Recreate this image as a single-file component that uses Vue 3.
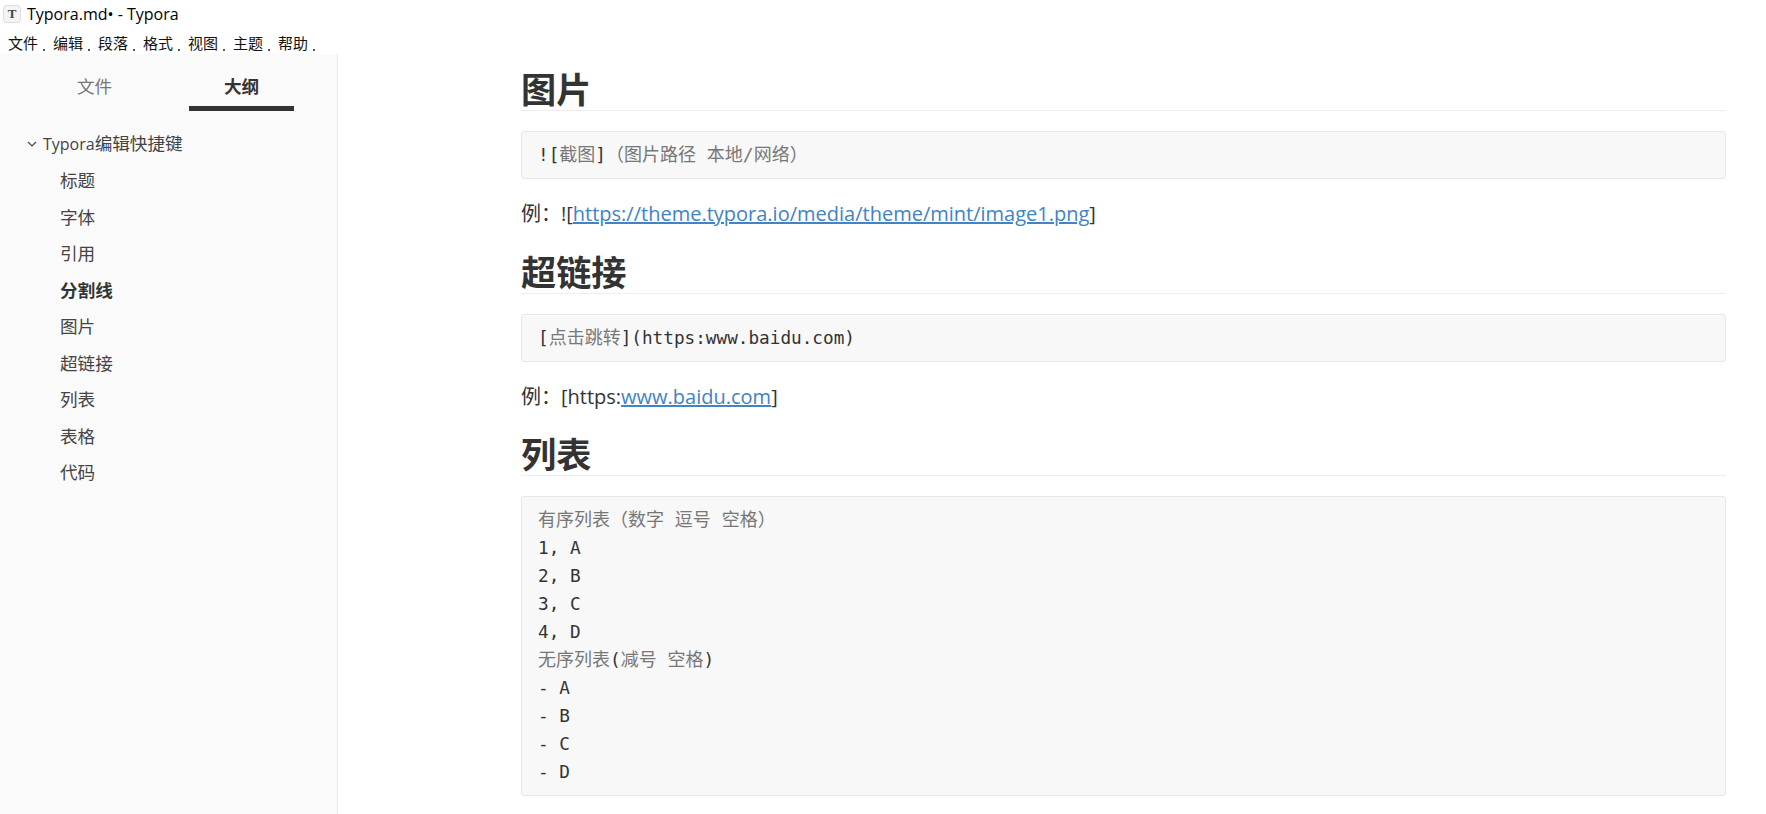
<script setup>
const menus = ['文件', '编辑', '段落', '格式', '视图', '主题', '帮助']
const outline = ['标题', '字体', '引用', '分割线', '图片', '超链接', '列表', '表格', '代码']
const listLines = ['1, A', '2, B', '3, C', '4, D']
const listLines2 = ['- A', '- B', '- C', '- D']
</script>

<template>
  <div class="win">
    <div class="titlebar">
      <span class="appicon">T</span>
      <span class="title">Typora.md• - Typora</span>
    </div>
    <div class="menubar">
      <span v-for="m in menus" :key="m" class="menu">{{ m }}<i class="dot"></i></span>
    </div>
    <div class="main">
      <aside class="side">
        <div class="tabs">
          <div class="tab">文件</div>
          <div class="tab on">大纲</div>
        </div>
        <div class="tree">
          <div class="row root">
            <svg class="chev" width="10" height="6" viewBox="0 0 10 6"><path d="M1 1l4 4 4-4" fill="none" stroke="#444" stroke-width="1.2" /></svg>
            <span><span class="latin">Typora</span>编辑快捷键</span>
          </div>
          <div v-for="o in outline" :key="o" class="row sub" :class="{ cur: o === '分割线' }">{{ o }}</div>
        </div>
      </aside>
      <main class="doc">
        <h2>图片</h2>
        <pre class="code"><code>![<span class="g">截图</span>]<span class="g">（图片路径 本地/网络）</span></code></pre>
        <p>例：![<a>https://theme.typora.io/media/theme/mint/image1.png</a>]</p>

        <h2>超链接</h2>
        <pre class="code"><code>[<span class="g">点击跳转</span>](https:www.baidu.com)</code></pre>
        <p>例：[https:<a>www.baidu.com</a>]</p>

        <h2>列表</h2>
        <pre class="code"><code><span class="g">有序列表（数字 逗号 空格）</span>
<template v-for="l in listLines" :key="l">{{ l }}
</template><span class="g">无序列表</span>(<span class="g">减号 空格</span>)
<template v-for="l in listLines2" :key="l">{{ l }}
</template></code></pre>
      </main>
    </div>
  </div>
</template>

<style>
html, body { margin: 0; background: #fff; }
</style>

<style scoped>
.win {
  width: 1766px;
  height: 814px;
  overflow: hidden;
  display: flex;
  flex-direction: column;
  font-family: "Open Sans", "Noto Sans CJK SC", sans-serif;
  color: #333;
}

.titlebar {
  height: 27px;
  display: flex;
  align-items: center;
  gap: 6px;
  padding-left: 3px;
  color: #000;
  font-size: 16px;
}
.appicon {
  width: 18px;
  height: 18px;
  border: 1px solid #ddd;
  border-radius: 4px;
  background: #f4f4f4;
  box-sizing: border-box;
  font: bold 13px/16px "Liberation Serif", serif;
  text-align: center;
  color: #444;
}

.menubar {
  height: 27px;
  display: flex;
  padding-left: 8px;
  gap: 15px;
  font-size: 15px;
  line-height: 32px;
  color: #111;
}
.menu { position: relative; width: 30px; white-space: nowrap; }
.dot {
  position: absolute;
  right: -7px;
  top: 22px;
  width: 2px;
  height: 2px;
  background: #555;
}

.main { flex: 1; display: flex; min-height: 0; }

.side {
  width: 338px;
  box-sizing: border-box;
  background: #fafafa;
  border-right: 1px solid #e8e8e8;
  flex-shrink: 0;
}
.tabs {
  display: grid;
  grid-template-columns: 105px 105px;
  column-gap: 42px;
  padding-left: 42px;
  height: 57px;
}
.tab {
  height: 57px;
  box-sizing: border-box;
  text-align: center;
  font-size: 17.6px;
  line-height: 65px;
  color: #777;
}
.tab.on {
  color: #333;
  font-weight: 700;
  border-bottom: 5px solid #333;
}

.tree { padding-top: 14.6px; }
.row {
  height: 36.5px;
  line-height: 36.5px;
  font-size: 17.6px;
  color: #444;
  white-space: nowrap;
}
.root { display: flex; align-items: center; padding-left: 27px; }
.chev { margin-right: 6px; }
.latin { font-size: 16px; }
.sub { padding-left: 60px; }
.cur { font-weight: 700; color: #333; }

.doc {
  flex: 1;
  padding-left: 183px;
  padding-right: 40px;
  min-width: 0;
  font-size: 20px;
}
h2 {
  margin: 0;
  height: 56px;
  line-height: 70px;
  font-size: 35.2px;
  font-weight: 700;
  color: #333;
  border-bottom: 1px solid #eee;
}
.code {
  margin: 20px 0 0;
  padding: 9px 16px;
  border: 1px solid #e7e7e7;
  border-radius: 3px;
  background: #f8f8f8;
  font-family: "DejaVu Sans Mono", "Noto Sans CJK SC", monospace;
  font-size: 17.7px;
  line-height: 28px;
  color: #333;
}
.code code { font-family: inherit; }
.g { color: #777; font-size: 18px; }
p {
  margin: 20px 0 0;
  height: 37.5px;
  line-height: 30px;
}
a { color: #4183c4; text-decoration: underline; }
</style>
